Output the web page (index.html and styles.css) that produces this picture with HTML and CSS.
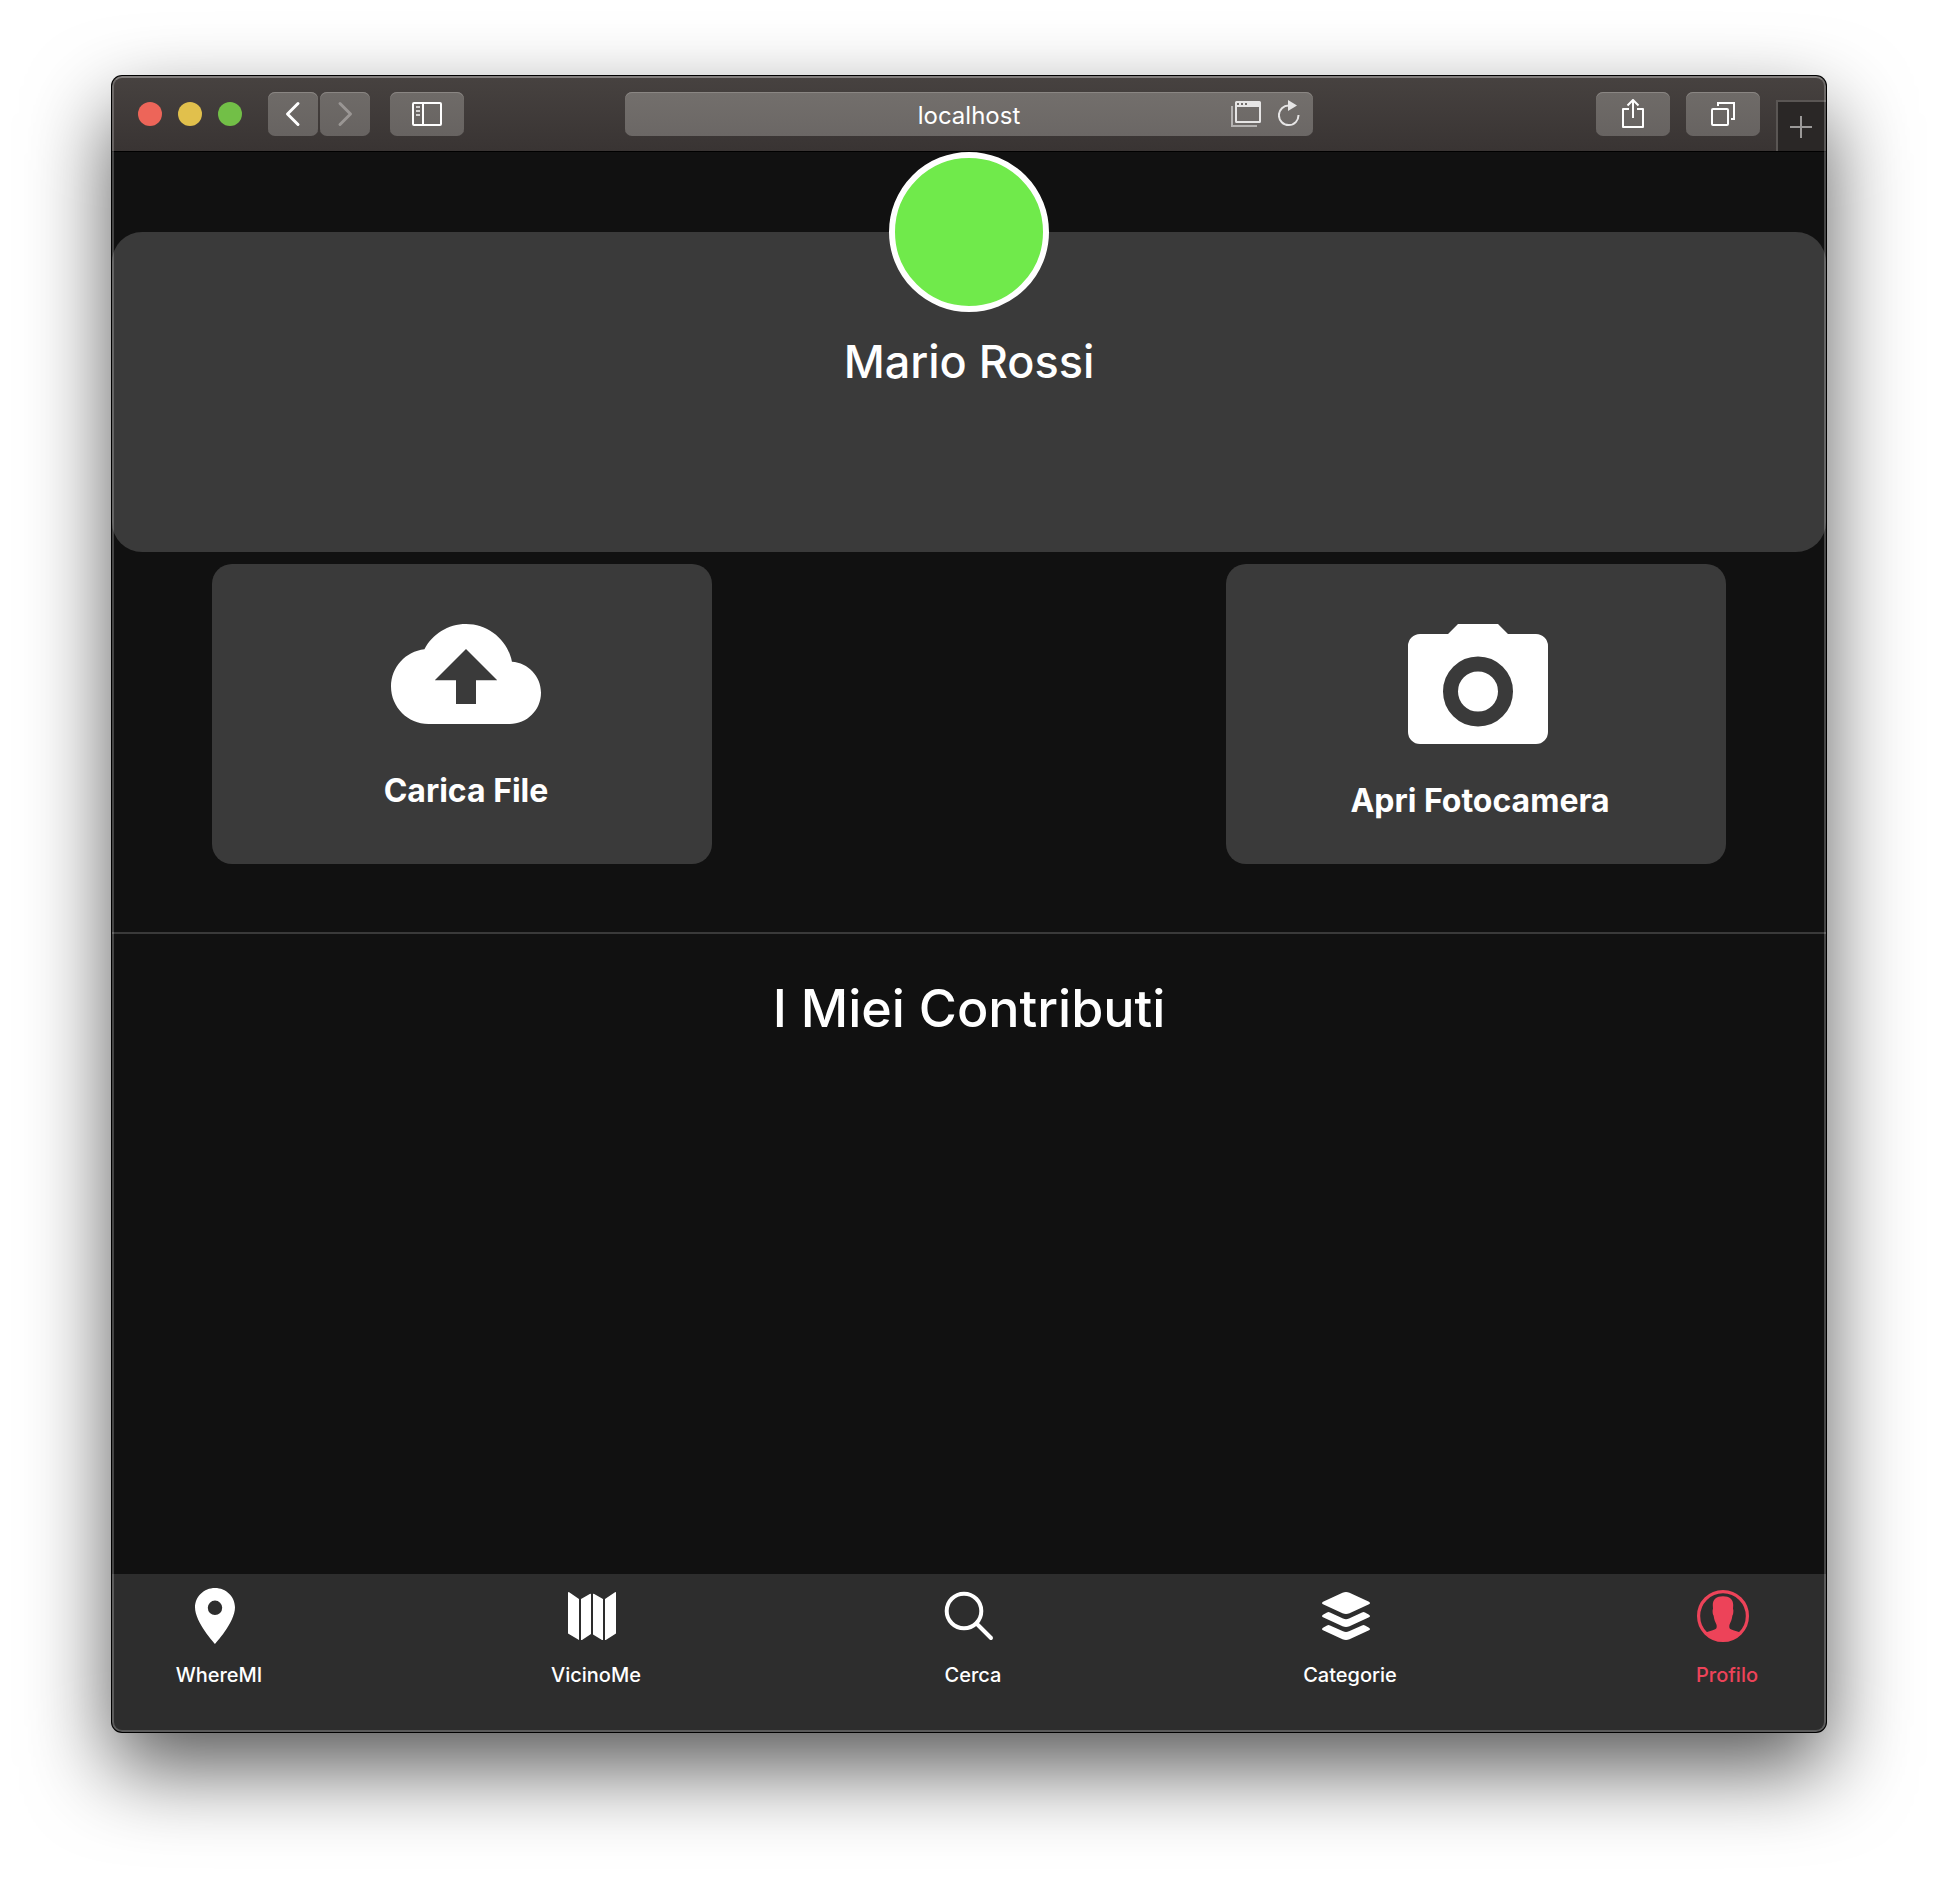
FILE: index.html
```html
<!DOCTYPE html>
<html lang="it">
<head>
  <meta charset="utf-8">
  <meta name="viewport" content="width=device-width, initial-scale=1">
  <title>Profilo</title>
  <link rel="stylesheet" href="styles.css">
</head>
<body>
  <div class="window">
    <header class="toolbar">
      <div class="toolbar-left">
        <div class="lights">
          <button class="light light-close" aria-label="Chiudi"></button>
          <button class="light light-minimize" aria-label="Riduci"></button>
          <button class="light light-zoom" aria-label="Ingrandisci"></button>
        </div>
        <div class="history">
          <button class="tool tool-small" aria-label="Indietro">
            <svg width="16" height="26" viewBox="0 0 16 26" fill="none" stroke="#fff" stroke-width="3" stroke-linecap="round" stroke-linejoin="round"><path d="M13 2.5 2.5 13 13 23.5"/></svg>
          </button>
          <button class="tool tool-small" aria-label="Avanti" disabled>
            <svg width="16" height="26" viewBox="0 0 16 26" fill="none" stroke="#9a9694" stroke-width="3" stroke-linecap="round" stroke-linejoin="round"><path d="M3 2.5 13.5 13 3 23.5"/></svg>
          </button>
        </div>
        <button class="tool" aria-label="Barra laterale">
          <svg width="30" height="24" viewBox="0 0 30 24" fill="none" stroke="#fff" stroke-width="2"><rect x="1" y="1" width="28" height="22" rx="1"/><path d="M11 1v22"/><path d="M4 5h4M4 9h4M4 13h4" stroke="#d2d0cf"/></svg>
        </button>
      </div>
      <div class="address">
        <input class="address-input" type="text" value="localhost" aria-label="Indirizzo">
        <div class="address-actions">
          <button class="plain" aria-label="Mostra finestre">
            <svg width="30" height="28" viewBox="0 0 30 28"><path d="M1 6v20h25" fill="none" stroke="#b5b3b2" stroke-width="2"/><path fill="#e6e5e5" fill-rule="evenodd" d="M5.500 1h23a1.500 1.500 0 0 1 1.500 1.500v19a1.500 1.500 0 0 1-1.500 1.500h-23A1.500 1.500 0 0 1 4 21.500v-19A1.500 1.500 0 0 1 5.500 1zM6 7v14h22V7zM6 3v2h2V3zm4 0v2h2V3zm4 0v2h2V3z"/></svg>
          </button>
          <button class="plain" aria-label="Ricarica">
            <svg width="22" height="28" viewBox="0 0 22 28"><path d="M20.500 15A9.800 9.800 0 1 1 11 5.500" fill="none" stroke="#e6e5e5" stroke-width="2"/><path d="M10 0v11l9-5.500z" fill="#e6e5e5"/></svg>
          </button>
        </div>
      </div>
      <div class="toolbar-right">
        <button class="tool" aria-label="Condividi">
          <svg width="22" height="30" viewBox="0 0 22 30" fill="none" stroke="#fff" stroke-width="2" stroke-linejoin="round"><path d="M7 10H1v18h20V10h-6"/><path d="M11 19V1M5.500 6.500 11 1l5.500 5.500"/></svg>
        </button>
        <button class="tool" aria-label="Panoramica pannelli">
          <svg width="24" height="24" viewBox="0 0 24 24" fill="none" stroke="#fff" stroke-width="2"><rect x="1" y="7" width="16" height="16" rx="1"/><path d="M7 4V1h16v16h-3"/></svg>
        </button>
        <button class="new-tab" aria-label="Nuovo pannello">
          <svg width="22" height="22" viewBox="0 0 22 22" stroke="#9b9998" stroke-width="2"><path d="M11 0v22M0 11h22"/></svg>
        </button>
      </div>
    </header>

    <main class="page">
      <section class="profile">
        <div class="avatar"></div>
        <h2 class="profile-name">Mario Rossi</h2>
      </section>

      <div class="actions">
        <button class="action">
          <svg class="action-icon" width="150" height="110" viewBox="0 4 24 17.600"><path fill="#fff" fill-rule="evenodd" d="M19.350 10.040C18.670 6.590 15.640 4 12 4 9.110 4 6.600 5.640 5.350 8.040 2.340 8.360 0 10.910 0 14c0 3.310 2.690 6 6 6h13c2.760 0 5-2.240 5-5 0-2.640-2.050-4.780-4.650-4.960zM12 8l5 5h-3.400v3.800h-3.200V13H7z"/></svg>
          <span class="action-label">Carica File</span>
        </button>
        <button class="action">
          <svg class="action-icon" width="144" height="120" viewBox="0 0 144 120"><path fill="#fff" d="M50 0h40l10 10h28a12 12 0 0 1 12 12v86a12 12 0 0 1-12 12H12a12 12 0 0 1-12-12V22a12 12 0 0 1 12-12h28z"/><circle cx="70" cy="67.500" r="27.500" fill="none" stroke="#3a3a3a" stroke-width="15"/></svg>
          <span class="action-label">Apri Fotocamera</span>
        </button>
      </div>

      <section class="contributions">
        <h1 class="contributions-title">I Miei Contributi</h1>
      </section>
    </main>

    <nav class="tabs">
      <a class="tab" href="#wheremi">
        <svg class="tab-icon" width="56" height="56" viewBox="0 0 56 56"><path fill="#fff" fill-rule="evenodd" d="M28 0C16.900 0 8 8.600 8 19.300 8 34.500 28 56 28 56s20-21.500 20-36.700C48 8.600 39.100 0 28 0zm0 27a7.200 7.200 0 1 1 0-14.400A7.200 7.200 0 0 1 28 27z"/></svg>
        <span>WhereMI</span>
      </a>
      <a class="tab" href="#vicinome">
        <svg class="tab-icon" width="56" height="56" viewBox="0 0 56 56" fill="#fff"><path d="M4 4.500q.5-.8 1.200-.3L15 11v41L4 45.500zM17 11l9.200-5.200q.8-.2.800.6V46l-9 6h-1zM29 6.400q0-.8.800-.6L39 11v41h-1l-9-5.500zM41 11l10-6.800q1-.5 1 .3v41L41.800 52H41z"/></svg>
        <span>VicinoMe</span>
      </a>
      <a class="tab" href="#cerca">
        <svg class="tab-icon" width="56" height="56" viewBox="0 0 56 56" fill="none" stroke="#fff" stroke-width="4" stroke-linecap="round"><circle cx="23" cy="23" r="17.300"/><path d="M36 36 50 50"/></svg>
        <span>Cerca</span>
      </a>
      <a class="tab" href="#categorie">
        <svg class="tab-icon" width="56" height="56" viewBox="0 0 56 56" fill="#fff"><path d="M24.500 4.800q3.500-1.600 7 0L51 13.700q2 1.300 0 2.600L31.500 25.200q-3.500 1.600-7 0L5 16.300q-2-1.300 0-2.600z"/><path d="M5 26.700l4-2.200q1.500-.8 3 0L25 30.500q3 1.300 6 0l13-6q1.500-.8 3 0l4 2.200q2 1.300 0 2.600L31.500 38.200q-3.500 1.600-7 0L5 29.300q-2-1.300 0-2.600z"/><path d="M5 39.700l4-2.200q1.500-.8 3 0L25 43.300q3 1.300 6 0l13-5.800q1.500-.8 3 0l4 2.200q2 1.300 0 2.600L31.500 51.200q-3.500 1.600-7 0L5 42.300q-2-1.300 0-2.600z"/></svg>
        <span>Categorie</span>
      </a>
      <a class="tab tab-active" href="#profilo" aria-current="page">
        <svg class="tab-icon" width="56" height="56" viewBox="0 0 56 56"><circle cx="28" cy="28" r="24.400" fill="none" stroke="#ed4359" stroke-width="3.200"/><path fill="#ed4359" d="M28 8.300c6.500 0 10.300 3.300 10.200 8.700l-.2 4c.7.500.4 5.500-.6 6.500-.4 4-1.700 6.500-3 9.500-.5 3 .4 4 2 4.500 3.500 1.300 7 2 9.600 3.300C41.500 50.300 35.500 53 28 53s-13.500-2.700-18-8.200c2.600-1.300 6.100-2 9.600-3.300 1.600-.5 2.500-1.500 2-4.500-1.300-3-2.600-5.500-3-9.500-1-1-1.300-6-.6-6.500l-.2-4c-.1-5.400 3.700-8.700 10.200-8.700z"/></svg>
        <span>Profilo</span>
      </a>
    </nav>
  </div>
</body>
</html>
```
FILE: styles.css
```css
* {
  box-sizing: border-box;
}

body {
  margin: 0;
  padding: 76px 112px 148px;
  background: #fff;
  color: #fff;
  font-family: Inter, "Liberation Sans", sans-serif;
}

button {
  margin: 0;
  padding: 0;
  border: 0;
  color: inherit;
  font: inherit;
}

svg {
  display: block;
  flex: none;
}

.window {
  position: relative;
  display: flex;
  flex-direction: column;
  min-height: calc(100vh - 224px);
  overflow: hidden;
  border-radius: 10px;
  background: #111;
  box-shadow: 0 0 0 1px #000, 0 36px 84px rgba(0, 0, 0, 0.66);
}

/* Thin light rim over the window's content */
.window::after {
  content: "";
  position: absolute;
  inset: 0;
  border: 2px solid rgba(255, 255, 255, 0.22);
  border-top-color: rgba(255, 255, 255, 0.32);
  border-radius: 10px;
  pointer-events: none;
}

/* Browser toolbar */
.toolbar {
  display: grid;
  grid-template-columns: 1fr minmax(0, 688px) 1fr;
  align-items: center;
  height: 76px;
  border-bottom: 1px solid #000;
  background: linear-gradient(#474240, #393433);
}

.toolbar-left {
  display: flex;
  align-items: center;
  padding-left: 26px;
}

.lights {
  display: flex;
  gap: 16px;
  margin-right: 26px;
}

.light {
  width: 24px;
  height: 24px;
  border-radius: 50%;
}

.light-close { background: #ed6559; }
.light-minimize { background: #e1c04c; }
.light-zoom { background: #72bf47; }

.history {
  display: flex;
  gap: 2px;
  margin-right: 20px;
}

.tool {
  display: flex;
  align-items: center;
  justify-content: center;
  width: 74px;
  height: 44px;
  border-radius: 7px;
  background: linear-gradient(#6f6b68, #676361);
  box-shadow: inset 0 1px #8a8683;
}

.tool-small {
  width: 50px;
}

.address {
  display: grid;
  grid-template-columns: 92px 1fr 92px;
  height: 44px;
  border-radius: 7px;
  background: linear-gradient(#736f6c, #6b6765);
  box-shadow: inset 0 1px #8a8683;
}

.address-input {
  grid-column: 2;
  width: 100%;
  padding: 4px 0 0;
  border: 0;
  outline: 0;
  background: transparent;
  color: #fff;
  font: 24px/32px Inter, "Liberation Sans", sans-serif;
  text-align: center;
}

.address-actions {
  display: flex;
  align-items: center;
  gap: 17px;
  padding-left: 10px;
}

.plain {
  background: transparent;
}

.toolbar-right {
  display: flex;
  align-items: center;
  justify-content: flex-end;
  gap: 16px;
  height: 75px;
}

.new-tab {
  display: flex;
  align-items: center;
  justify-content: center;
  align-self: flex-end;
  width: 50px;
  height: 51px;
  padding-right: 2px;
  border-top: 2px solid #5a5654;
  border-left: 2px solid #5a5654;
  background: #2a2726;
}

/* Profile page */
.page {
  flex: 1;
}

.profile {
  min-height: 320px;
  margin-top: 80px;
  border-radius: 30px;
  background: #3a3a3a;
  text-align: center;
}

.avatar {
  position: relative;
  top: -80px;
  width: 160px;
  height: 160px;
  margin: 0 auto -58px;
  border: 6px solid #fff;
  border-radius: 50%;
  background: #70ea4b;
}

.profile-name {
  margin: 0;
  font-size: 45px;
  font-weight: 500;
  line-height: 56px;
}

.actions {
  display: flex;
  justify-content: space-between;
  padding: 12px 100px 68px;
  border-bottom: 2px solid #3a3a3a;
}

.action {
  display: flex;
  flex-direction: column;
  align-items: center;
  gap: 36px;
  width: 500px;
  height: 300px;
  padding: 60px 0 0 8px;
  border-radius: 20px;
  background: #3a3a3a;
}

.action-label {
  font-size: 32px;
  font-weight: 700;
  line-height: 42px;
}

.contributions {
  padding: 40px 0;
  text-align: center;
}

.contributions-title {
  margin: 0;
  font-size: 52px;
  font-weight: 500;
  line-height: 70px;
}

/* Bottom tab bar */
.tabs {
  display: flex;
  justify-content: space-between;
  padding: 14px 52px 44px 60px;
  background: #2d2d2d;
}

.tab {
  display: flex;
  flex-direction: column;
  align-items: center;
  gap: 18px;
  width: 94px;
  color: #fff;
  font-size: 20px;
  font-weight: 500;
  line-height: 26px;
  text-decoration: none;
}

.tab-icon {
  margin-right: 8px;
}

.tab-active {
  color: #ed4359;
}
```
